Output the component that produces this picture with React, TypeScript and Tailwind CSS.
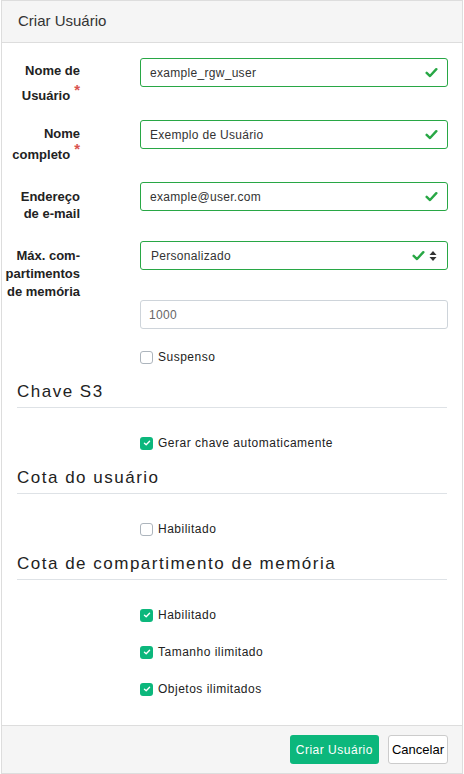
import React from 'react';

const FONT = { fontFamily: '"Liberation Sans", Arial, sans-serif' };

// Green check used on validated inputs
const CheckIcon = ({ className = '' }: { className?: string }) => (
  <svg viewBox="0 0 14 14" className={className} fill="none">
    <polyline points="1.8,7.4 5.4,10.8 12.2,3.4" stroke="#28a745" strokeWidth="2.6" strokeLinecap="round" strokeLinejoin="round" />
  </svg>
);

const SortIcon = () => (
  <svg viewBox="0 0 8 14" className="w-[8px] h-[14px]">
    <path d="M0.5 6 L4 2 L7.5 6 Z" fill="#333" />
    <path d="M0.5 8 L4 12 L7.5 8 Z" fill="#333" />
  </svg>
);

const Required = () => <span className="text-[#d9534f] text-[15px] relative top-[-5px] ml-[4px]">*</span>;

const Checkbox = ({ checked, label }: { checked?: boolean; label: string }) => (
  <div className="flex items-center h-[16px] ml-[138px]">
    {checked ? (
      <span className="w-[13px] h-[13px] rounded-[3px] bg-[#0cb77c] flex items-center justify-center">
        <svg viewBox="0 0 10 10" className="w-[8px] h-[8px]" fill="none">
          <polyline points="1.8,5.2 4,7.2 8.2,2.8" stroke="#fff" strokeWidth="1.7" strokeLinecap="round" strokeLinejoin="round" />
        </svg>
      </span>
    ) : (
      <span className="w-[13px] h-[13px] rounded-[3px] border border-[#adb5bd] bg-white" />
    )}
    <span className="ml-[5px] text-[12px] tracking-[0.5px] text-[#222]">{label}</span>
  </div>
);

const SectionTitle = ({ title, className = '' }: { title: string; className?: string }) => (
  <div className={`mx-[15px] border-b border-[#dee2e6] pb-[3px] ${className}`}>
    <div className="text-[17px] leading-[24px] tracking-[1.5px] text-[#222]">{title}</div>
  </div>
);

const ValidInput = ({ value }: { value: string }) => (
  <div className="w-[308px] h-[29px] border border-[#28a745] rounded-[3px] flex items-center pl-[9px] pr-[9px] bg-white">
    <span className="flex-1 text-[12px] tracking-[0.3px] text-[#333]">{value}</span>
    <CheckIcon className="w-[13px] h-[13px]" />
  </div>
);

export default function App() {
  return (
    <div className="w-[464px] h-[774px] bg-white" style={FONT}>
      <div className="ml-px w-[462px] h-[774px] border border-[#ddd] flex flex-col">
        {/* header */}
        <div className="h-[42px] bg-[#f5f5f5] border-b border-[#ddd] flex items-center pl-[16px] shrink-0">
          <span className="text-[15px] text-[#333]">Criar Usuário</span>
        </div>

        {/* body */}
        <div className="flex-1 pt-[15px] flex flex-col">
          <div className="flex h-[62px]">
            <div className="w-[78px] text-right font-bold text-[13px] text-[#222] leading-[24px] pt-[1px]">
              Nome de<br />Usuário<Required />
            </div>
            <div className="ml-[60px]"><ValidInput value="example_rgw_user" /></div>
          </div>

          <div className="flex h-[62px]">
            <div className="w-[78px] text-right font-bold text-[13px] text-[#222] leading-[20px] pt-[4px]">
              Nome<br />completo<Required />
            </div>
            <div className="ml-[60px]"><ValidInput value="Exemplo de Usuário" /></div>
          </div>

          <div className="flex h-[59px]">
            <div className="w-[78px] text-right font-bold text-[13px] text-[#222] leading-[17px] pt-[6px]">
              Endereço<br />de e-mail
            </div>
            <div className="ml-[60px]"><ValidInput value="example@user.com" /></div>
          </div>

          <div className="flex h-[59px]">
            <div className="w-[78px] text-right font-bold text-[13px] text-[#222] leading-[18px] pt-[6px]">
              Máx. com-<br />partimentos<br />de memória
            </div>
            <div className="ml-[60px]">
              <div className="w-[308px] h-[29px] border border-[#28a745] rounded-[3px] flex items-center pl-[10px] pr-[10px] bg-white">
                <span className="flex-1 text-[12px] tracking-[0.3px] text-[#333]">Personalizado</span>
                <CheckIcon className="w-[13px] h-[13px]" />
                <span className="ml-[4px]"><SortIcon /></span>
              </div>
            </div>
          </div>

          <div className="ml-[138px] w-[308px] h-[29px] border border-[#ced4da] rounded-[3px] flex items-center pl-[8px] text-[12px] tracking-[0.3px] text-[#666]">
            1000
          </div>

          <div className="mt-[20px]"><Checkbox label="Suspenso" /></div>

          <SectionTitle title="Chave S3" className="mt-[15px]" />
          <div className="mt-[27px]"><Checkbox checked label="Gerar chave automaticamente" /></div>

          <SectionTitle title="Cota do usuário" className="mt-[15px]" />
          <div className="mt-[27px]"><Checkbox label="Habilitado" /></div>

          <SectionTitle title="Cota de compartimento de memória" className="mt-[15px]" />
          <div className="mt-[27px]"><Checkbox checked label="Habilitado" /></div>
          <div className="mt-[21px]"><Checkbox checked label="Tamanho ilimitado" /></div>
          <div className="mt-[21px]"><Checkbox checked label="Objetos ilimitados" /></div>
        </div>

        {/* footer */}
        <div className="h-[48px] bg-[#f5f5f5] border-t border-[#ddd] flex items-start justify-end pt-[9px] pr-[14px] gap-[9px] shrink-0">
          <button className="h-[29px] px-[6px] rounded-[3px] bg-[#0cb77c] text-white text-[12px] tracking-[0.5px]">
            Criar Usuário
          </button>
          <button className="h-[29px] px-[3px] rounded-[3px] bg-white border border-[#ccc] text-black text-[13px]">
            Cancelar
          </button>
        </div>
      </div>
    </div>
  );
}
